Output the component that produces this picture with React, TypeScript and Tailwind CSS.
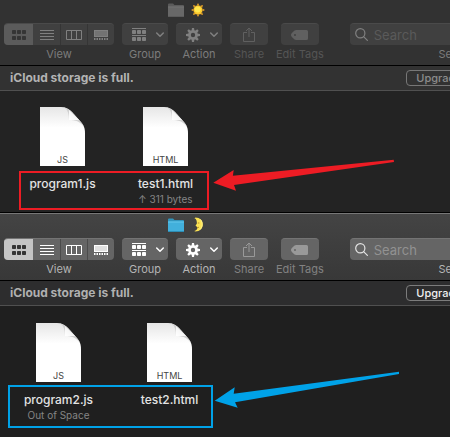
import React from "react";

type Tone = "inactive" | "active";

const theme = {
  inactive: {
    frame: "bg-[#323232]",
    titlePad: "h-[23px]",
    button: "bg-[#404040] border-t border-[#4a4a4a] text-[#808080]",
    selected: "bg-[#5b5b5b] text-[#353535]",
    disabled: "text-[#606060]",
    label: "text-[#7c7c7c]",
    dimLabel: "text-[#555555]",
    banner: "bg-[#323232] border-[#505050]",
    bannerText: "text-[#b3b3b3]",
    upgrade: "border-[#777777] text-[#8c8c8c]",
    search: "bg-[#404040] border-t border-[#4a4a4a] text-[#808080]",
    placeholder: "placeholder:text-[#5a5a5a]",
    divider: "border-[#353535]",
  },
  active: {
    frame: "bg-linear-to-b from-[#444444] to-[#383838] border-t border-[#777777]",
    titlePad: "h-6",
    button: "bg-[#656565] border-t border-[#747474] text-white",
    selected: "bg-[#c4c4c4] text-[#333333]",
    disabled: "text-[#999999]",
    label: "text-[#b4b4b4]",
    dimLabel: "text-[#828282]",
    banner: "bg-[#2d2d2e] border-[#505050]",
    bannerText: "text-[#b0b0b0]",
    upgrade: "border-[#7c7c7c] text-[#f0f0f0]",
    search: "bg-[#656565] border-t border-[#747474] text-[#e4e4e4]",
    placeholder: "placeholder:text-[#929292]",
    divider: "border-[#4b4b4b]",
  },
};

const Squares = ({ y }: { y: number }) => (
  <>
    {[0, 5, 10].map((x) => (
      <rect key={x} x={x} y={y} width="4" height="4" rx="0.8" />
    ))}
  </>
);

const GridIcon = () => (
  <svg width="14" height="10" fill="currentColor" aria-hidden="true">
    <Squares y={0} />
    <Squares y={6} />
  </svg>
);

const ListIcon = () => (
  <svg width="14" height="10" fill="currentColor" aria-hidden="true">
    <path d="M0 0h14v1H0zM0 3h14v1H0zM0 6h14v1H0zM0 9h14v1H0z" />
  </svg>
);

const ColumnsIcon = () => (
  <svg width="16" height="10" fill="none" stroke="currentColor" aria-hidden="true">
    <path d="M.5.5h15v9H.5zM5.5.5v9M10.5.5v9" />
  </svg>
);

const GalleryIcon = () => (
  <svg width="14" height="10" fill="currentColor" aria-hidden="true">
    <rect x="0.5" y="0.5" width="13" height="6" fillOpacity="0.8" stroke="currentColor" />
    <path d="M0 8h1.5v2H0zM2.5 8H4v2H2.5zM5 8h1.5v2H5zM7.5 8H9v2H7.5zM10 8h1.5v2H10zM12.5 8H14v2h-1.5z" />
  </svg>
);

const GroupIcon = () => (
  <svg width="14" height="13" fill="currentColor" aria-hidden="true">
    <path d="M0 0h14v1H0zM0 7h14v1H0z" />
    <Squares y={2} />
    <Squares y={9} />
  </svg>
);

const Chevron = () => (
  <svg width="8" height="6" fill="none" stroke="currentColor" strokeWidth="1.5" aria-hidden="true">
    <path d="M.7 1l3.3 3.3L7.3 1" strokeLinecap="round" strokeLinejoin="round" />
  </svg>
);

const GearIcon = () => (
  <svg width="14" height="14" viewBox="-7 -7 14 14" fill="currentColor" aria-hidden="true">
    {[0, 45, 90, 135, 180, 225, 270, 315].map((a) => (
      <path key={a} d="M-1.5-4l.5-3h2l.5 3z" transform={`rotate(${a})`} />
    ))}
    <circle r="3.5" fill="none" stroke="currentColor" strokeWidth="2.6" />
  </svg>
);

const ShareIcon = () => (
  <svg width="12" height="16" fill="none" stroke="currentColor" aria-hidden="true">
    <path d="M4 5.5H.5v9h11v-9H8M6 10V1M3 4l3-3 3 3" />
  </svg>
);

const TagIcon = () => (
  <svg width="17" height="10" fill="currentColor" aria-hidden="true">
    <path
      fillRule="evenodd"
      d="M5 0h10.500a1.500 1.500 0 0 1 1.500 1.500v7a1.500 1.500 0 0 1-1.500 1.500H5C3.500 10 0 6.500 0 5s3.500-5 5-5zM4 4a1 1 0 1 0 0 2 1 1 0 0 0 0-2z"
    />
  </svg>
);

const SearchIcon = () => (
  <svg width="13" height="13" className="shrink-0" fill="none" stroke="currentColor" strokeWidth="1.2" aria-hidden="true">
    <circle cx="5.300" cy="5.300" r="4.600" />
    <path d="M8.600 8.600l3.800 3.800" strokeLinecap="round" />
  </svg>
);

const FolderIcon = ({ tone }: { tone: Tone }) => {
  const on = tone === "active";
  return (
    <svg width="16" height="14" aria-hidden="true">
      <path d="M0 1.500Q0 .5 1 .5h4l1.500 1.500H15q1 0 1 1V5H0z" fill={on ? "#3295bd" : "#5b5b5b"} />
      <rect y="3.500" width="16" height="10.500" rx="0.6" fill={on ? "#42b0dc" : "#686868"} />
      <path d="M0 4h16" stroke={on ? "#64c8ec" : "#727272"} />
      <path d="M0 13.500h16" stroke={on ? "#2d8db5" : "#5c5c5c"} />
    </svg>
  );
};

const SunIcon = () => (
  <svg width="14" height="14" viewBox="-7 -7 14 14" role="img" aria-label="Sun">
    {[0, 45, 90, 135, 180, 225, 270, 315].map((a) => (
      <path key={a} d="M-1.300-4.600L0-7l1.300 2.400z" fill="#f0a528" transform={`rotate(${a})`} />
    ))}
    <circle r="4.500" fill="#fdc92c" />
    <circle cx="-.3" cy="-.6" r="3" fill="#ffe84f" />
  </svg>
);

const MoonIcon = () => (
  <svg width="9" height="15" role="img" aria-label="Moon">
    <path
      d="M1.500.5C6 .5 8.800 3.500 8.800 7.400s-3 7-7.300 7c-.6 0-1-.2-1.200-.5 2-.5 3-1.500 3-2.900 0-.6-.5-.8-.4-1.300L1.700 8.800c-.5-.4 1.200-1.500 1.200-2.500C2.900 4 2.500 2 .5 1.200z"
      fill="#fce354"
    />
    <path d="M3.800 6h1.500M3 10.800l2-.6" stroke="#a67a1c" strokeWidth=".8" />
    <path d="M6.500 2.500C9 5.500 8.500 10 6 12.500" stroke="#fff18c" fill="none" />
  </svg>
);

function FileIcon({ kind }: { kind: string }) {
  const id = `fold-${React.useId()}`;
  return (
    <svg width="45" height="59" viewBox="0 0 45 59" className="block" aria-hidden="true">
      <defs>
        <linearGradient id={id} x1="0" y1="0" x2="0" y2="1">
          <stop offset="0" stopColor="#e6e6e6" />
          <stop offset="0.35" stopColor="#ffffff" />
        </linearGradient>
        <linearGradient id={`${id}c`} x1="0" y1="1" x2="1" y2="0">
          <stop offset="0" stopColor="#ffffff" />
          <stop offset="0.5" stopColor="#f5f5f5" />
          <stop offset="1" stopColor="#c8c8c8" />
        </linearGradient>
      </defs>
      <path d="M0 0h21c5 0 8 2 11 5l8 9c3 3.500 5 6 5 12v33H0z" fill={`url(#${id})`} />
      <path d="M24 .5c4 2 5 7 5 12.500 6 0 11 1 15 7-1-2-2-4-4-6l-8-9c-2-2-5-4-8-4.500z" fill="#d2d2d2" />
      <path d="M29 3v10h10z" fill={`url(#${id}c)`} />
      <text x="22.500" y="56" textAnchor="middle" fontSize="9" fill="#444444" fontFamily="Inter, sans-serif">
        {kind}
      </text>
    </svg>
  );
}

function Item({ label, className, children }: { label: string; className: string; children: React.ReactNode }) {
  return (
    <div className="flex shrink-0 flex-col items-center gap-px">
      {children}
      <span className={`text-[11px] leading-4 whitespace-nowrap ${className}`}>{label}</span>
    </div>
  );
}

function Toolbar({ tone }: { tone: Tone }) {
  const t = theme[tone];
  const views = [
    { name: "Icons", icon: <GridIcon /> },
    { name: "List", icon: <ListIcon /> },
    { name: "Columns", icon: <ColumnsIcon /> },
    { name: "Gallery", icon: <GalleryIcon /> },
  ];
  const menu = `flex h-[22px] w-[46px] items-center justify-between rounded pr-1 pl-2.5 ${t.button}`;
  const plain = `flex h-[22px] w-[38px] items-center justify-center rounded ${t.button}`;
  return (
    <div className="flex gap-2 overflow-hidden pb-[3px] pl-1">
      <Item label="View" className={t.label}>
        <div className={`flex h-[22px] w-[110px] overflow-hidden rounded ${t.button}`}>
          {views.map((v, i) => (
            <button
              key={v.name}
              type="button"
              aria-label={v.name}
              aria-pressed={i === 0}
              className={`flex items-center justify-center ${i === 0 ? `w-[29px] ${t.selected}` : "w-[27px]"} ${i > 1 ? `border-l ${t.divider}` : ""}`}
            >
              {v.icon}
            </button>
          ))}
        </div>
      </Item>
      <Item label="Group" className={t.label}>
        <button type="button" aria-label="Group" aria-haspopup="menu" className={menu}>
          <GroupIcon />
          <Chevron />
        </button>
      </Item>
      <Item label="Action" className={t.label}>
        <button type="button" aria-label="Action" aria-haspopup="menu" className={menu}>
          <GearIcon />
          <Chevron />
        </button>
      </Item>
      <Item label="Share" className={t.dimLabel}>
        <button type="button" aria-label="Share" disabled className={plain}>
          <span className={t.disabled}><ShareIcon /></span>
        </button>
      </Item>
      <Item label="Edit Tags" className={t.dimLabel}>
        <button type="button" aria-label="Edit Tags" disabled className={plain}>
          <span className={t.disabled}><TagIcon /></span>
        </button>
      </Item>
      <div className="ml-[18px] shrink-0">
        <Item label="Search" className={t.label}>
          <label className={`flex h-[22px] w-[214px] items-center gap-1.5 rounded pl-[5px] ${t.search}`}>
            <SearchIcon />
            <input
              type="search"
              aria-label="Search"
              placeholder="Search"
              className={`w-full bg-transparent text-[13px] leading-4 outline-none ${t.placeholder}`}
            />
          </label>
        </Item>
      </div>
    </div>
  );
}

function WindowTop({ tone }: { tone: Tone }) {
  const t = theme[tone];
  return (
    <>
      <header className={t.frame}>
        <div className={`flex items-end justify-center gap-1.5 pr-[76px] pb-1.5 ${t.titlePad}`}>
          <FolderIcon tone={tone} />
          <span className="flex w-4 justify-center">{tone === "active" ? <MoonIcon /> : <SunIcon />}</span>
        </div>
        <Toolbar tone={tone} />
      </header>
      <div className={`flex h-[26px] items-center justify-between overflow-hidden border-t border-b border-t-black pl-2.5 ${t.banner}`}>
        <p className={`text-[12px] leading-4 font-bold whitespace-nowrap ${t.bannerText}`}>iCloud storage is full.</p>
        <button
          type="button"
          className={`-mr-8 h-4 w-19 shrink-0 rounded border text-[11px] leading-3 font-medium whitespace-nowrap ${t.upgrade}`}
        >
          Upgrade…
        </button>
      </div>
    </>
  );
}

function FileTile({ kind, name, note }: { kind: string; name: string; note?: string }) {
  return (
    <figure className="flex w-[91px] flex-col items-center">
      <FileIcon kind={kind} />
      <figcaption className="flex flex-col items-center pt-2.5 whitespace-nowrap">
        <span className="text-[12px] leading-4 font-medium text-[#e4e4e4]">{name}</span>
        {note && <span className="text-[10px] leading-[14px] text-[#858585]">{note}</span>}
      </figcaption>
    </figure>
  );
}

export default function App() {
  return (
    <main className="flex min-h-screen flex-col overflow-hidden bg-[#1f1f1f] font-['Inter','Liberation_Sans',sans-serif]">
      <section>
        <WindowTop tone="inactive" />
        <div className="relative flex gap-3 border-b border-black bg-[#232323] pt-4 pb-[6px] pl-[17px]">
          <FileTile kind="JS" name="program1.js" />
          <FileTile kind="HTML" name="test1.html" note="↑ 311 bytes" />
          <div className="absolute top-20 left-[19px] h-[39px] w-[190px] border-2 border-[#ed1c24]" />
          <svg className="absolute top-[63px] left-[213px]" width="184" height="40" viewBox="213 154 184 40" aria-hidden="true">
            <path d="M213.300 182.700L233.700 170l-.8 5.700L393.700 159.700l.3 2.300L234 185l2 5.700z" fill="#ed1c24" />
          </svg>
        </div>
      </section>
      <section className="flex grow flex-col">
        <WindowTop tone="active" />
        <div className="relative flex grow gap-5 bg-[#1f1f1f] pt-[17px] pb-[7px] pl-[13px]">
          <FileTile kind="JS" name="program2.js" note="Out of Space" />
          <FileTile kind="HTML" name="test2.html" />
          <div className="absolute top-[79px] left-2 h-[43px] w-[205px] border-2 border-[#00a2e8]" />
          <svg className="absolute top-[62px] left-[213px]" width="188" height="42" viewBox="213 368 188 42" aria-hidden="true">
            <path d="M214.700 400.700L234.700 387.300l-1 6.400L399 371.700v2.300L235 402.300l2.700 5.500z" fill="#00a2e8" />
          </svg>
        </div>
      </section>
    </main>
  );
}
